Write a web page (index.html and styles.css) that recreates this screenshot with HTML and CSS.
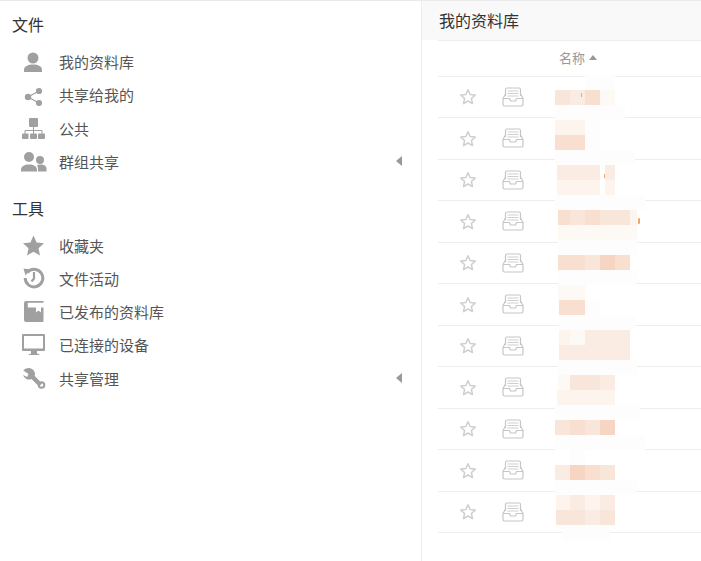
FILE: index.html
```html
<!DOCTYPE html>
<html lang="zh">
<head>
<meta charset="utf-8">
<title>我的资料库</title>
<link rel="stylesheet" href="styles.css">
</head>
<body>
<svg class="defs" width="0" height="0" aria-hidden="true">
  <defs>
    <symbol id="star-o" viewBox="0 0 18 18"><path d="M9 1.800l2.100 4.700 5.100.6-3.800 3.400 1.100 5.100L9 13l-4.500 2.600 1.100-5.100-3.800-3.400 5.100-.6z" fill="none" stroke="#cfcfcf" stroke-width="1.500" stroke-linejoin="round"/></symbol>
    <symbol id="tray" viewBox="0 0 22 20"><g fill="none" stroke="#c6c6c6" stroke-width="1.200" stroke-linejoin="round"><path d="M3.500 9V2.500Q3.500 1 5 1h12q1.500 0 1.500 1.500V9"/><path d="M5.500 4h11M5.500 6.500h11M5.500 9h11" stroke="#cfcfcf"/><path d="M3.500 7L1 11.500v6Q1 19 2.500 19h17q1.500 0 1.500-1.500v-6L18.500 7"/><path d="M1 11.500h6.500l1 2.500h5l1-2.500H21"/></g></symbol>
  </defs>
</svg>
<div class="app">
  <nav class="side">
    <h2 class="side-title">文件</h2>
    <ul class="menu">
      <li class="item"><svg class="ico" viewBox="0 0 26 22"><circle cx="12" cy="7" r="5.500"/><path d="M3 21v-2.500c0-3 4-5 9-5s9 2 9 5V21z"/></svg><span>我的资料库</span></li>
      <li class="item"><svg class="ico" viewBox="0 0 26 22"><path d="M18 7L7 13l11 6" fill="none" stroke="#a0a0a0" stroke-width="1.200"/><circle cx="18" cy="7" r="3.100"/><circle cx="7" cy="13" r="3.200"/><circle cx="18" cy="19" r="3.100"/></svg><span>共享给我的</span></li>
      <li class="item"><svg class="ico" viewBox="0 0 26 22"><rect x="8" y="1" width="9" height="9" rx="1"/><path d="M12.500 10v7M4 17v-3.500h17V17" fill="none" stroke="#a0a0a0"/><rect x="1" y="16.500" width="6.500" height="5.500" rx="1"/><rect x="9" y="16.500" width="7" height="5.500" rx="1"/><rect x="17" y="16.500" width="7" height="5.500" rx="1"/></svg><span>公共</span></li>
      <li class="item"><svg class="ico" viewBox="0 0 26 22"><circle cx="8" cy="7" r="5"/><path d="M0 21.500v-2c0-3 3.500-5 8-5s8 2 8 5v2z"/><circle cx="19" cy="10" r="4"/><path d="M17 21.500v-3c0-1.500-.6-2.500-1-3.200 1-.5 2-.8 3.500-.8 3.500 0 6 1.500 6 4v3z"/></svg><span>群组共享</span><i class="caret"></i></li>
    </ul>
    <h2 class="side-title tools">工具</h2>
    <ul class="menu">
      <li class="item"><svg class="ico" viewBox="0 0 26 22"><path d="M12.500 1.500l3.100 6.900 7.400.8-5.500 5 1.500 7.300-6.500-3.700L6 21.500l1.500-7.300-5.500-5 7.400-.8z"/></svg><span>收藏夹</span></li>
      <li class="item"><svg class="ico" viewBox="0 0 26 22"><path d="M6.200 5.500A8.800 8.800 0 1 1 4.200 11" fill="none" stroke="#a0a0a0" stroke-width="3"/><path d="M2.500 1.500l6.500 1-4.500 6z"/><path d="M13 5v6.500l-2.500 3" fill="none" stroke="#a0a0a0" stroke-width="2.200"/></svg><span>文件活动</span></li>
      <li class="item"><svg class="ico" viewBox="0 0 26 22"><path d="M5 0h17.500v1.800H6.800v4.700H15v5l2.500-2 2.500 2v-5h2.500V20a1 1 0 0 1-1 1H5a2 2 0 0 1-2-2V2a2 2 0 0 1 2-2z"/></svg><span>已发布的资料库</span></li>
      <li class="item"><svg class="ico" viewBox="0 0 26 22"><path fill-rule="evenodd" d="M2 0h21a1 1 0 0 1 1 1v15a1 1 0 0 1-1 1h-7v2.500l2.500 1V21h-11v-.5l2.500-1V17H2a1 1 0 0 1-1-1V1a1 1 0 0 1 1-1zM3 2v12.500h19V2z"/></svg><span>已连接的设备</span></li>
      <li class="item"><svg class="ico" viewBox="0 0 26 22"><path d="M8 1a6.500 6.500 0 0 0-5.800 2.600L7.500 7 6.200 10 2 8A6.300 6.300 0 0 0 10.500 12L18 19.500l3-3L13.800 9A6.300 6.300 0 0 0 8 1z"/><circle cx="20.500" cy="18" r="2.800" fill="none" stroke="#a0a0a0" stroke-width="2"/></svg><span>共享管理</span><i class="caret"></i></li>
    </ul>
  </nav>
  <main class="main">
    <h1 class="main-title">我的资料库</h1>
    <div class="list">
      <div class="head"><span>名称</span><i class="sort"></i></div>
      <div class="row"><svg class="star"><use href="#star-o"/></svg><svg class="tray"><use href="#tray"/></svg></div>
      <div class="row"><svg class="star"><use href="#star-o"/></svg><svg class="tray"><use href="#tray"/></svg></div>
      <div class="row"><svg class="star"><use href="#star-o"/></svg><svg class="tray"><use href="#tray"/></svg></div>
      <div class="row"><svg class="star"><use href="#star-o"/></svg><svg class="tray"><use href="#tray"/></svg></div>
      <div class="row"><svg class="star"><use href="#star-o"/></svg><svg class="tray"><use href="#tray"/></svg></div>
      <div class="row"><svg class="star"><use href="#star-o"/></svg><svg class="tray"><use href="#tray"/></svg></div>
      <div class="row"><svg class="star"><use href="#star-o"/></svg><svg class="tray"><use href="#tray"/></svg></div>
      <div class="row"><svg class="star"><use href="#star-o"/></svg><svg class="tray"><use href="#tray"/></svg></div>
      <div class="row"><svg class="star"><use href="#star-o"/></svg><svg class="tray"><use href="#tray"/></svg></div>
      <div class="row"><svg class="star"><use href="#star-o"/></svg><svg class="tray"><use href="#tray"/></svg></div>
      <div class="row"><svg class="star"><use href="#star-o"/></svg><svg class="tray"><use href="#tray"/></svg></div>
      <div class="mosaic" aria-hidden="true">
        <div class="band"><i></i><i></i><i class="w"></i><i class="w"></i></div>
        <div class="band"><i class="c"></i><i class="d"></i><i class="b"></i><i class="f"></i></div>
        <div class="band"><i class="w"></i><i class="w"></i><i class="w"></i><i class="w"></i><i class="w p10"></i></div>
        <div class="band"><i class="e"></i><i class="e"></i><i class="w"></i></div>
        <div class="band"><i class="b"></i><i class="b"></i><i class="w"></i></div>
        <div class="band"><i class="w"></i><i class="w"></i><i class="w"></i><i class="w"></i><i class="w"></i><i class="w p5"></i></div>
        <div class="band"><i class="d in2"></i><i class="d"></i><i class="d"></i><i class="g5"></i><i class="d p10"></i></div>
        <div class="band"><i class="e in2"></i><i class="e"></i><i class="e"></i><i class="g5"></i><i class="e p10"></i></div>
        <div class="band"><i class="w"></i><i class="w"></i><i class="w"></i><i class="w"></i><i class="w"></i><i class="w"></i></div>
        <div class="band"><i class="b in3"></i><i class="c"></i><i class="b"></i><i class="c"></i><i class="c"></i><i class="e p7"></i></div>
        <div class="band"><i class="f in3"></i><i class="f"></i><i class="f"></i><i class="f"></i><i class="f"></i><i class="f p7"></i></div>
        <div class="band"><i class="w in3"></i><i class="w"></i><i class="w"></i><i class="w"></i><i class="w"></i><i class="w p7"></i></div>
        <div class="band"><i class="b in3"></i><i class="b"></i><i class="c"></i><i class="a"></i><i class="b"></i></div>
        <div class="band"><i class="w in3"></i><i class="w"></i><i class="w"></i><i class="w"></i><i class="w"></i><i class="w p7"></i></div>
        <div class="band"><i class="f in3"></i><i class="f"></i></div>
        <div class="band"><i class="b in4"></i><i class="b"></i><i class="w"></i></div>
        <div class="band"><i class="w in4"></i><i class="w"></i><i class="w"></i><i class="w"></i><i class="w"></i><i class="w p5"></i></div>
        <div class="band"><i class="e in4"></i><i class="f"></i><i class="d"></i><i class="d"></i><i class="d"></i></div>
        <div class="band"><i class="d in4"></i><i class="d"></i><i class="d"></i><i class="d"></i><i class="d"></i></div>
        <div class="band"><i class="w in3"></i><i class="w"></i><i class="w"></i><i class="w"></i><i class="w"></i><i class="w p7"></i></div>
        <div class="band"><i class="f in3"></i><i class="c"></i><i class="c"></i><i class="d"></i></div>
        <div class="band"><i class="e in2"></i><i class="e"></i><i class="e"></i><i class="e"></i></div>
        <div class="band"><i class="w"></i><i class="w"></i><i class="w"></i><i class="w"></i><i class="w"></i><i class="w p10"></i></div>
        <div class="band"><i class="c"></i><i class="b"></i><i class="c"></i><i class="a"></i></div>
        <div class="band"><i class="w"></i><i class="w"></i><i class="w"></i><i class="w"></i><i class="w"></i><i class="w"></i></div>
        <div class="band"><i></i><i class="w"></i></div>
        <div class="band"><i class="d"></i><i class="a"></i><i class="b"></i><i class="c"></i></div>
        <div class="band"><i class="w"></i><i class="w"></i><i class="w"></i><i class="w"></i><i class="w"></i><i class="w p7"></i></div>
        <div class="band"><i class="e in1"></i><i class="d"></i><i class="e"></i><i class="d"></i></div>
        <div class="band"><i class="c in1"></i><i class="c"></i><i class="d"></i><i class="c"></i></div>
        <div class="band"><i class="w in7"></i><i class="w"></i><i class="w"></i><i class="w p10"></i></div>
        <b class="speck s1"></b><b class="speck s2"></b><b class="speck s3"></b>
      </div>
    </div>
  </main>
</div>
</body>
</html>
```
FILE: styles.css
```css
* { box-sizing: border-box; }
html, body { margin: 0; height: 100%; overflow: hidden; background: #fff; }
body { font-family: "Noto Sans CJK SC", "Liberation Sans", sans-serif; color: #444; }
.defs { position: absolute; }
.app { display: flex; height: 561px; border-top: 1px solid #eaeaea; }

.side { width: 422px; flex: none; border-right: 1px solid #eee; padding-top: 11px; }
.side-title { margin: 0 0 9px 12px; font-size: 16px; line-height: 24px; font-weight: 400; color: #333; }
.tools { margin-top: 17.500px; }
.menu { list-style: none; margin: 0; padding: 0; }
.item { display: flex; align-items: center; height: 33.250px; padding: 0 19px 0 21px; font-size: 15px; color: #555; }
.item span { flex: 1; line-height: 24px; margin-top: 1px; }
.ico { width: 26px; height: 22px; margin-right: 12px; fill: #a0a0a0; flex: none; }
.caret { width: 0; height: 0; border-style: solid; border-width: 5px 6px 5px 0; border-color: transparent #999 transparent transparent; }

.main { flex: 1; position: relative; min-width: 0; }
.main-title { margin: 0; height: 39px; padding-left: 17px; background: #f9f9f9; font-size: 16px; font-weight: 400; line-height: 39px; color: #333; }
.list { position: relative; margin-left: 16px; border-top: 1px solid #eee; }
.head { display: flex; align-items: center; height: 35.900px; padding: 0 0 2px 121px; border-bottom: 1px solid #eee; font-size: 13px; color: #999; }
.sort { margin-left: 4px; width: 0; height: 0; border-style: solid; border-width: 0 4px 5px; border-color: transparent transparent #999; }
.row { display: flex; align-items: center; height: 41.500px; border-bottom: 1px solid #eee; padding-left: 21px; }
.star { width: 18px; height: 18px; margin-right: 25px; }
.tray { width: 22px; height: 20px; margin-top: -1px; }

.mosaic { position: absolute; left: 117px; top: 34px; width: 100px; }
.band { display: flex; height: 15px; }
.band i { width: 15px; height: 15px; flex: none; }
.a { background: #f6d6c2; }
.b { background: #f8dfcf; }
.c { background: #f9e6da; }
.d { background: #fbece3; }
.e { background: #fdf4ee; }
.f { background: #fdf9f5; }
.w { background: #fdfdfd; }
.band .in1 { width: 14px; margin-left: 1px; }
.band .in2 { width: 13px; margin-left: 2px; }
.band .in3 { width: 12px; margin-left: 3px; }
.band .in4 { width: 11px; margin-left: 4px; }
.band .in7 { width: 8px; margin-left: 7px; }
.band .p5 { width: 5px; }
.band .p7 { width: 7px; }
.band .p10 { width: 10px; }
.band .g5 { width: 5px; }
.speck { position: absolute; width: 1px; background: #f2a36b; }
.s1 { left: 26px; top: 18px; height: 4px; }
.s2 { left: 49px; top: 99px; height: 4px; }
.s3 { left: 83px; top: 143px; height: 6px; width: 2px; border-radius: 2px; }
```
